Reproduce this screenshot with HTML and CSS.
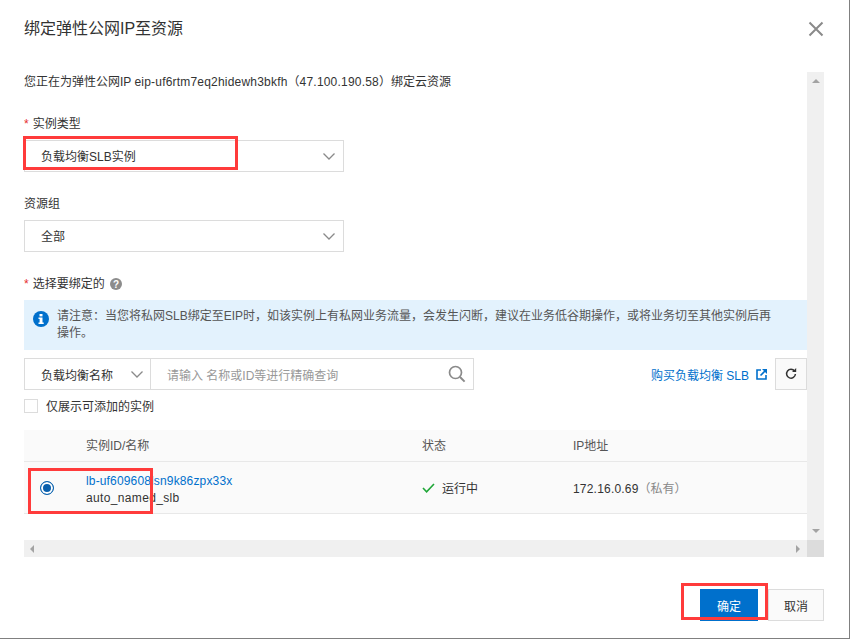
FILE: index.html
```html
<!DOCTYPE html>
<html lang="zh-CN">
<head>
<meta charset="utf-8">
<title>绑定弹性公网IP至资源</title>
<link rel="stylesheet" href="styles.css">
</head>
<body>
<div class="dialog">
  <header class="dialog-head">
    <h1 class="dialog-title">绑定弹性公网IP至资源</h1>
    <svg class="close" width="16" height="16" viewBox="0 0 16 16"><path d="M1.5 1.5l13 13M14.5 1.5l-13 13" stroke="#8a8a8a" stroke-width="2" fill="none"/></svg>
  </header>
  <div class="pane">
    <main class="pane-body">
      <p class="intro">您正在为弹性公网IP <span class="wide">eip-uf6rtm7eq2hidewh3bkfh</span>（<span class="wide">47.100.190.58</span>）绑定云资源</p>
      <div class="field field-type">
        <label class="label"><span class="req">*</span>实例类型</label>
        <div class="select"><span>负载均衡SLB实例</span><svg width="12" height="7" viewBox="0 0 12 7"><path d="M.5.5L6 6 11.5.5" stroke="#8a8a8a" stroke-width="1.3" fill="none"/></svg></div>
      </div>
      <div class="field field-group">
        <label class="label">资源组</label>
        <div class="select"><span>全部</span><svg width="12" height="7" viewBox="0 0 12 7"><path d="M.5.5L6 6 11.5.5" stroke="#8a8a8a" stroke-width="1.3" fill="none"/></svg></div>
      </div>
      <div class="bind-label">
        <span class="req">*</span>选择要绑定的
        <svg class="help" width="12" height="12" viewBox="0 0 12 12"><circle cx="6" cy="6" r="6" fill="#8c8c8c"/><text x="6" y="9.5" text-anchor="middle" class="help-q">?</text></svg>
      </div>
      <div class="alert">
        <svg class="alert-icon" width="16" height="16" viewBox="0 0 16 16"><circle cx="8" cy="8" r="8" fill="#0070cc"/><rect x="6.5" y="3" width="3" height="2.4" fill="#fff"/><path d="M5.5 6.6h4v5h1.2v1.4H5.5v-1.4h1.1V8H5.5z" fill="#fff"/></svg>
        <p class="alert-text">请注意：当您将私网SLB绑定至EIP时，如该实例上有私网业务流量，会发生闪断，建议在业务低谷期操作，或将业务切至其他实例后再操作。</p>
      </div>
      <div class="toolbar">
        <div class="search">
          <div class="search-type"><span>负载均衡名称</span><svg width="12" height="7" viewBox="0 0 12 7"><path d="M.5.5L6 6 11.5.5" stroke="#8a8a8a" stroke-width="1.3" fill="none"/></svg></div>
          <div class="search-input"><span>请输入 名称或ID等进行精确查询</span><svg width="18" height="18" viewBox="0 0 18 18"><circle cx="7.5" cy="7.5" r="6" stroke="#8a8a8a" stroke-width="1.7" fill="none"/><path d="M12 12l4.6 4.6" stroke="#8a8a8a" stroke-width="2" fill="none"/></svg></div>
        </div>
        <a class="buy">购买负载均衡 SLB<svg width="11" height="11" viewBox="0 0 11 11"><path d="M5 1H1v9h9V6" stroke="#0070cc" stroke-width="1.6" fill="none"/><path d="M4.5 6.5L9 2" stroke="#0070cc" stroke-width="1.6" fill="none"/><path d="M6 0h5v5z" fill="#0070cc"/></svg></a>
        <div class="refresh"><svg width="12" height="12" viewBox="0 0 12 12"><path d="M9.6 3.2A4.4 4.4 0 1 0 10.4 6" stroke="#333" stroke-width="1.5" fill="none"/><path d="M7 4h4.2V0z" fill="#333"/></svg></div>
      </div>
      <label class="only"><span class="checkbox"></span><span class="only-text">仅展示可添加的实例</span></label>
      <div class="table">
        <div class="row row-head">
          <div></div><div>实例ID/名称</div><div>状态</div><div>IP地址</div>
        </div>
        <div class="row row-data">
          <div class="cell-radio"><span class="radio"></span></div>
          <div class="cell-id"><a class="id-link">lb-uf609608lsn9k86zpx33x</a><span class="name">auto_named_slb</span></div>
          <div class="cell-status"><svg width="13" height="10" viewBox="0 0 13 10"><path d="M1 5l3.6 3.8L12 1" stroke="#1fa637" stroke-width="1.6" fill="none"/></svg>运行中</div>
          <div><span class="wide">172.16.0.69</span><span class="muted">（私有）</span></div>
        </div>
      </div>
    </main>
    <div class="vbar">
      <svg width="8" height="4" viewBox="0 0 8 4"><path d="M0 4L4 0l4 4z" fill="#a3a3a3"/></svg>
      <svg width="8" height="4" viewBox="0 0 8 4"><path d="M0 0l4 4 4-4z" fill="#a3a3a3"/></svg>
    </div>
    <div class="hbar">
      <svg width="4" height="8" viewBox="0 0 4 8"><path d="M4 0L0 4l4 4z" fill="#a3a3a3"/></svg>
      <svg width="4" height="8" viewBox="0 0 4 8"><path d="M0 0l4 4-4 4z" fill="#a3a3a3"/></svg>
    </div>
    <div class="corner"></div>
  </div>
  <footer class="dialog-foot">
    <button class="btn btn-primary">确定</button>
    <button class="btn btn-plain">取消</button>
  </footer>
  <span class="mark mark-type"></span>
  <span class="mark mark-radio"></span>
  <span class="mark mark-ok"></span>
</div>
</body>
</html>
```

FILE: styles.css
```css
* { box-sizing: border-box; }
html, body { margin: 0; padding: 0; background: #fff; }
body {
  font-family: "Liberation Sans", "Noto Sans CJK SC", sans-serif;
  font-size: 12px;
  color: #333;
}
.dialog {
  position: relative;
  width: 850px;
  height: 639px;
  border-right: 1px solid #808080;
  border-bottom: 1px solid #808080;
  overflow: hidden;
  display: flex;
  flex-direction: column;
  padding-left: 24px;
}
.dialog-head {
  height: 72px;
  flex: none;
  display: flex;
  justify-content: space-between;
  align-items: flex-start;
  padding-top: 18px;
  padding-right: 25px;
}
.dialog-title { margin: 0; font-size: 16px; line-height: 22px; font-weight: 400; color: #333; }
.close { margin-top: 3px; }
.pane {
  width: 800px;
  height: 485px;
  flex: none;
  display: grid;
  grid-template-columns: 783px 17px;
  grid-template-rows: 468px 17px;
}
.pane-body { overflow: hidden; }
.wide { letter-spacing: .2px; }
.intro { margin: 0; padding-top: 2px; line-height: 16px; }
.label { display: block; line-height: 18px; }
.req { color: #e62e2e; margin-right: 4px; }
.field-type { padding-top: 25px; }
.field-group { padding-top: 23px; }
.select {
  width: 320px;
  height: 32px;
  margin-top: 7px;
  border: 1px solid #dcdcdc;
  display: flex;
  align-items: center;
  justify-content: space-between;
  padding: 0 8px 0 16px;
}
.select span { margin-bottom: 2px; }
.bind-label { margin-top: 23px; line-height: 18px; display: flex; align-items: center; }
.help { margin-left: 5px; }
.help-q { font-size: 10px; fill: #fff; font-weight: 700; }
.alert {
  margin-top: 7px;
  height: 50px;
  background: #e3f2fd;
  padding: 8px 30px 0 9px;
  display: flex;
  gap: 8px;
}
.alert-icon { flex: none; margin-top: 3px; }
.alert-text { margin: 0; line-height: 17px; color: #555; }
.toolbar { margin-top: 8px; height: 32px; display: flex; align-items: center; }
.search { width: 450px; height: 32px; border: 1px solid #dcdcdc; display: flex; }
.search-type {
  width: 126px;
  flex: none;
  border-right: 1px solid #dcdcdc;
  display: flex;
  align-items: center;
  justify-content: space-between;
  padding: 0 7px 0 16px;
}
.search-input {
  flex: 1;
  display: flex;
  align-items: center;
  justify-content: space-between;
  padding: 0 7px 0 16px;
  color: #999;
}
.buy {
  margin-left: auto;
  color: #0070cc;
  display: flex;
  align-items: center;
  gap: 7px;
}
.refresh {
  margin-left: 8px;
  width: 32px;
  height: 32px;
  border: 1px solid #dcdcdc;
  background: #fafafa;
  display: flex;
  align-items: center;
  justify-content: center;
}
.only { margin-top: 8px; height: 16px; display: flex; align-items: center; gap: 8px; }
.only-text { margin-bottom: 2px; }
.checkbox { width: 14px; height: 14px; border: 1px solid #dcdcdc; background: #fff; }
.table { margin-top: 16px; }
.row {
  display: grid;
  grid-template-columns: 62px 336px 151px 1fr;
  align-items: center;
  background: #fafafa;
  border-bottom: 1px solid #e8e8e8;
}
.row-head { height: 32px; color: #555; padding-bottom: 2px; }
.row-data { height: 52px; }
.cell-radio { padding: 1px 0 0 16px; display: flex; }
.radio {
  width: 14px;
  height: 14px;
  border-radius: 50%;
  border: 1px solid #0a63b0;
  background: #0a5fac;
  box-shadow: inset 0 0 0 2px #fff;
}
.cell-id { display: flex; flex-direction: column; gap: 1px; padding-top: 4px; line-height: 16px; }
.id-link { color: #0070cc; letter-spacing: .15px; }
.name { letter-spacing: .35px; }
.cell-status { display: flex; align-items: center; gap: 7px; }
.muted { color: #888; }
.vbar, .hbar { background: #f0f0f0; display: flex; justify-content: space-between; align-items: center; }
.vbar { flex-direction: column; padding: 7px 0; }
.hbar { padding: 0 7px 0 6px; }
.corner { background: #dcdcdc; }
.dialog-foot { height: 81px; display: flex; justify-content: flex-end; align-items: flex-start; padding: 32px 25px 0 0; gap: 10px; }
.btn { height: 32px; font: inherit; font-size: 12px; border: 1px solid #dcdcdc; padding: 0; cursor: pointer; }
.btn-primary { width: 58px; background: #0070cc; border-color: #0070cc; color: #fff; }
.btn-plain { width: 56px; background: #fafafa; color: #333; }
.mark { position: absolute; border: 3px solid #ff3b3b; pointer-events: none; }
.mark-type { left: 23px; top: 136px; width: 215px; height: 34px; }
.mark-radio { left: 28px; top: 468px; width: 125px; height: 46px; }
.mark-ok { left: 681px; top: 583px; width: 87px; height: 37px; }
```
